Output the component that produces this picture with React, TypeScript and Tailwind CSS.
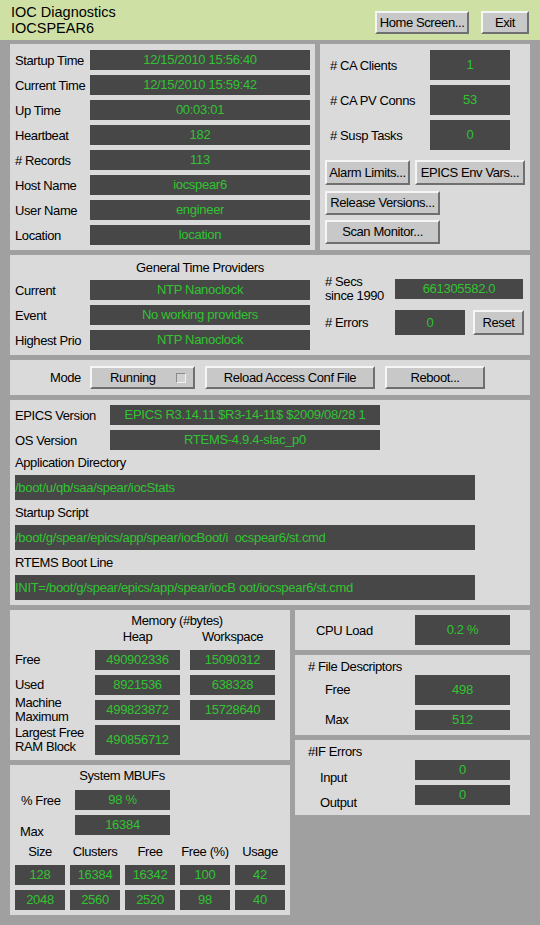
import React from "react";

type P = { children?: React.ReactNode; className?: string };

const V = ({ children, className = "", left = false }: P & { left?: boolean }) => (
  <div
    className={`bg-[#474747] text-[#31c331] text-[13px] tracking-[-0.3px] flex items-center overflow-hidden whitespace-pre shrink-0 ${
      left ? "justify-start" : "justify-center"
    } ${className}`}
  >
    {children}
  </div>
);

const Btn = ({ children, className = "" }: P) => (
  <div
    className={`bg-[#c8c8c8] border-2 border-t-[#f5f5f5] border-l-[#f5f5f5] border-b-[#6f6f6f] border-r-[#6f6f6f] flex items-center justify-center text-[13px] tracking-[-0.4px] text-black shrink-0 ${className}`}
  >
    {children}
  </div>
);

const Panel = ({ children, className = "" }: P) => (
  <div className={`bg-[#dadada] ${className}`}>{children}</div>
);

const Row = ({ label, value }: { label: string; value: string }) => (
  <div className="flex items-center h-[20px]">
    <div className="w-[75px] shrink-0 pt-[2px]">{label}</div>
    <V className="w-[220px] h-[20px]">{value}</V>
  </div>
);

export default function App() {
  return (
    <div className="w-[540px] h-[925px] bg-[#a0a0a0] text-black text-[13px] tracking-[-0.4px] font-['Liberation_Sans',Arial,sans-serif] overflow-hidden">
      {/* Header */}
      <div className="h-[40px] bg-[#cfe0a4] flex items-start px-[11px]">
        <div className="pt-[4px] text-[14.5px] leading-[16px] tracking-[0px]">
          <div>IOC Diagnostics</div>
          <div>IOCSPEAR6</div>
        </div>
        <div className="ml-auto mt-[11px] flex gap-[12px]">
          <Btn className="w-[94px] h-[23px]">Home Screen...</Btn>
          <Btn className="w-[48px] h-[23px]">Exit</Btn>
        </div>
      </div>

      <div className="px-[10px] pt-[4px] flex flex-col gap-[5px]">
        {/* Row 1 */}
        <div className="flex gap-[5px] h-[206px]">
          <Panel className="w-[305px] pt-[6px] px-[5px] flex flex-col gap-[5px]">
            <Row label="Startup Time" value="12/15/2010 15:56:40" />
            <Row label="Current Time" value="12/15/2010 15:59:42" />
            <Row label="Up Time" value="00:03:01" />
            <Row label="Heartbeat" value="182" />
            <Row label="# Records" value="113" />
            <Row label="Host Name" value="iocspear6" />
            <Row label="User Name" value="engineer" />
            <Row label="Location" value="location" />
          </Panel>
          <Panel className="w-[210px] pt-[6px] pl-[5px] flex flex-col">
            <div className="flex flex-col gap-[5px]">
              {[
                ["# CA Clients", "1"],
                ["# CA PV Conns", "53"],
                ["# Susp Tasks", "0"],
              ].map(([l, v]) => (
                <div key={l} className="flex items-center h-[30px]">
                  <div className="w-[105px] pl-[5px] pt-[2px] shrink-0">{l}</div>
                  <V className="w-[80px] h-[30px]">{v}</V>
                </div>
              ))}
            </div>
            <div className="flex gap-[5px] mt-[10px]">
              <Btn className="w-[85px] h-[25px]">Alarm Limits...</Btn>
              <Btn className="w-[110px] h-[25px]">EPICS Env Vars...</Btn>
            </div>
            <Btn className="w-[115px] h-[24px] mt-[6px]">Release Versions...</Btn>
            <Btn className="w-[115px] h-[24px] mt-[5px]">Scan Monitor...</Btn>
          </Panel>
        </div>

        {/* Row 2: time providers */}
        <Panel className="h-[100px] flex">
          <div className="w-[315px] pt-[3px] pl-[5px] flex flex-col">
            <div className="h-[20px] leading-[20px] ml-[75px] w-[220px] text-center">General Time Providers</div>
            <div className="mt-[2px] flex flex-col gap-[5px]">
              <Row label="Current" value="NTP Nanoclock" />
              <Row label="Event" value="No working providers" />
              <Row label="Highest Prio" value="NTP Nanoclock" />
            </div>
          </div>
          <div className="pt-[21px] flex flex-col">
            <div className="flex items-center h-[26px]">
              <div className="w-[70px] leading-[14px] shrink-0">
                <div># Secs</div>
                <div>since 1990</div>
              </div>
              <V className="w-[128px] h-[20px]">661305582.0</V>
            </div>
            <div className="flex items-center h-[25px] mt-[8px]">
              <div className="w-[70px] shrink-0"># Errors</div>
              <V className="w-[70px] h-[25px]">0</V>
              <Btn className="w-[51px] h-[25px] ml-[8px]">Reset</Btn>
            </div>
          </div>
        </Panel>

        {/* Row 3: mode */}
        <Panel className="h-[35px] flex items-center pl-[40px]">
          <div className="w-[40px] shrink-0">Mode</div>
          <Btn className="w-[105px] h-[23px] !justify-start pl-[18px] pr-[7px]">
            <span>Running</span>
            <span className="ml-auto w-[10px] h-[10px] border border-t-[#8a8a8a] border-l-[#8a8a8a] border-b-[#f2f2f2] border-r-[#f2f2f2] bg-[#d0d0d0]" />
          </Btn>
          <Btn className="w-[170px] h-[23px] ml-[10px]">Reload Access Conf File</Btn>
          <Btn className="w-[100px] h-[23px] ml-[10px]">Reboot...</Btn>
        </Panel>

        {/* Row 4: versions */}
        <Panel className="h-[205px] pt-[5px] pl-[5px] flex flex-col">
          <div className="flex items-center h-[20px]">
            <div className="w-[95px] shrink-0 pt-[2px]">EPICS Version</div>
            <V className="w-[270px] h-[20px]">EPICS R3.14.11 $R3-14-11$ $2009/08/28 1</V>
          </div>
          <div className="flex items-center h-[20px] mt-[5px]">
            <div className="w-[95px] shrink-0 pt-[2px]">OS Version</div>
            <V className="w-[270px] h-[20px]">RTEMS-4.9.4-slac_p0</V>
          </div>
          <div className="h-[25px] flex items-center">Application Directory</div>
          <V left className="w-[460px] h-[25px]">/boot/u/qb/saa/spear/iocStats</V>
          <div className="h-[25px] flex items-center">Startup Script</div>
          <V left className="w-[460px] h-[25px]">/boot/g/spear/epics/app/spear/iocBoot/i  ocspear6/st.cmd</V>
          <div className="h-[25px] flex items-center">RTEMS Boot Line</div>
          <V left className="w-[460px] h-[25px]">INIT=/boot/g/spear/epics/app/spear/iocB oot/iocspear6/st.cmd</V>
        </Panel>

        {/* Row 5 */}
        <div className="flex gap-[5px]">
          <div className="w-[280px] flex flex-col gap-[5px]">
            {/* Memory */}
            <Panel className="h-[150px] pt-[3px] pl-[5px] flex flex-col">
              <div className="h-[16px] leading-[16px] ml-[72px] w-[180px] text-center">Memory (#bytes)</div>
              <div className="h-[16px] leading-[16px] flex">
                <div className="w-[80px]" />
                <div className="w-[85px] text-center">Heap</div>
                <div className="w-[85px] ml-[10px] text-center">Workspace</div>
              </div>
              <div className="mt-[5px] flex flex-col gap-[5px]">
                {[
                  ["Free", "490902336", "15090312"],
                  ["Used", "8921536", "638328"],
                  ["Machine\nMaximum", "499823872", "15728640"],
                ].map(([l, h, w]) => (
                  <div key={l} className="flex items-center h-[20px]">
                    <div className="w-[80px] shrink-0 whitespace-pre leading-[14px]">{l}</div>
                    <V className="w-[85px] h-[20px]">{h}</V>
                    <V className="w-[85px] h-[20px] ml-[10px]">{w}</V>
                  </div>
                ))}
                <div className="flex items-center h-[30px]">
                  <div className="w-[80px] shrink-0 leading-[14px]">
                    <div>Largest Free</div>
                    <div>RAM Block</div>
                  </div>
                  <V className="w-[85px] h-[30px]">490856712</V>
                </div>
              </div>
            </Panel>

            {/* MBUFs */}
            <Panel className="h-[150px] pt-[3px] pl-[5px] flex flex-col">
              <div className="h-[16px] leading-[16px] ml-[57px] w-[100px] text-center">System MBUFs</div>
              <div className="flex items-center h-[20px] mt-[6px]">
                <div className="w-[60px] pl-[6px] pt-[2px] shrink-0">% Free</div>
                <V className="w-[95px] h-[20px]">98 %</V>
              </div>
              <div className="flex items-start h-[20px] mt-[5px]">
                <div className="w-[60px] pl-[5px] pt-[10px] leading-[14px] shrink-0">Max</div>
                <V className="w-[95px] h-[20px]">16384</V>
              </div>
              <div className="flex gap-[5px] h-[30px] items-center pt-[3px]">
                {["Size", "Clusters", "Free", "Free (%)", "Usage"].map((h) => (
                  <div key={h} className="w-[50px] text-center whitespace-nowrap">{h}</div>
                ))}
              </div>
              <div className="flex flex-col gap-[5px]">
                {[
                  ["128", "16384", "16342", "100", "42"],
                  ["2048", "2560", "2520", "98", "40"],
                ].map((r, i) => (
                  <div key={i} className="flex gap-[5px]">
                    {r.map((c, j) => (
                      <V key={j} className="w-[50px] h-[20px]">{c}</V>
                    ))}
                  </div>
                ))}
              </div>
            </Panel>
          </div>

          <div className="w-[235px] flex flex-col gap-[5px]">
            <Panel className="h-[40px] flex items-center pl-[21px]">
              <div className="w-[99px] shrink-0 pt-[2px]">CPU Load</div>
              <V className="w-[95px] h-[30px]">0.2 %</V>
            </Panel>
            <Panel className="h-[80px] pt-[5px] pl-[13px] flex flex-col">
              <div className="h-[14px] leading-[14px]"># File Descriptors</div>
              <div className="flex items-center h-[30px] mt-[1px]">
                <div className="w-[107px] pl-[17px] shrink-0">Free</div>
                <V className="w-[95px] h-[30px]">498</V>
              </div>
              <div className="flex items-center h-[20px] mt-[5px]">
                <div className="w-[107px] pl-[17px] shrink-0">Max</div>
                <V className="w-[95px] h-[20px]">512</V>
              </div>
            </Panel>
            <Panel className="h-[75px] pt-[5px] pl-[13px] flex flex-col">
              <div className="h-[14px] leading-[14px]">#IF Errors</div>
              <div className="flex h-[20px] mt-[1px]">
                <div className="w-[107px] pl-[12px] shrink-0 self-end leading-[14px] -mb-[5px]">Input</div>
                <V className="w-[95px] h-[20px]">0</V>
              </div>
              <div className="flex h-[20px] mt-[5px]">
                <div className="w-[107px] pl-[12px] shrink-0 self-end leading-[14px] -mb-[5px]">Output</div>
                <V className="w-[95px] h-[20px]">0</V>
              </div>
            </Panel>
          </div>
        </div>
      </div>
    </div>
  );
}
